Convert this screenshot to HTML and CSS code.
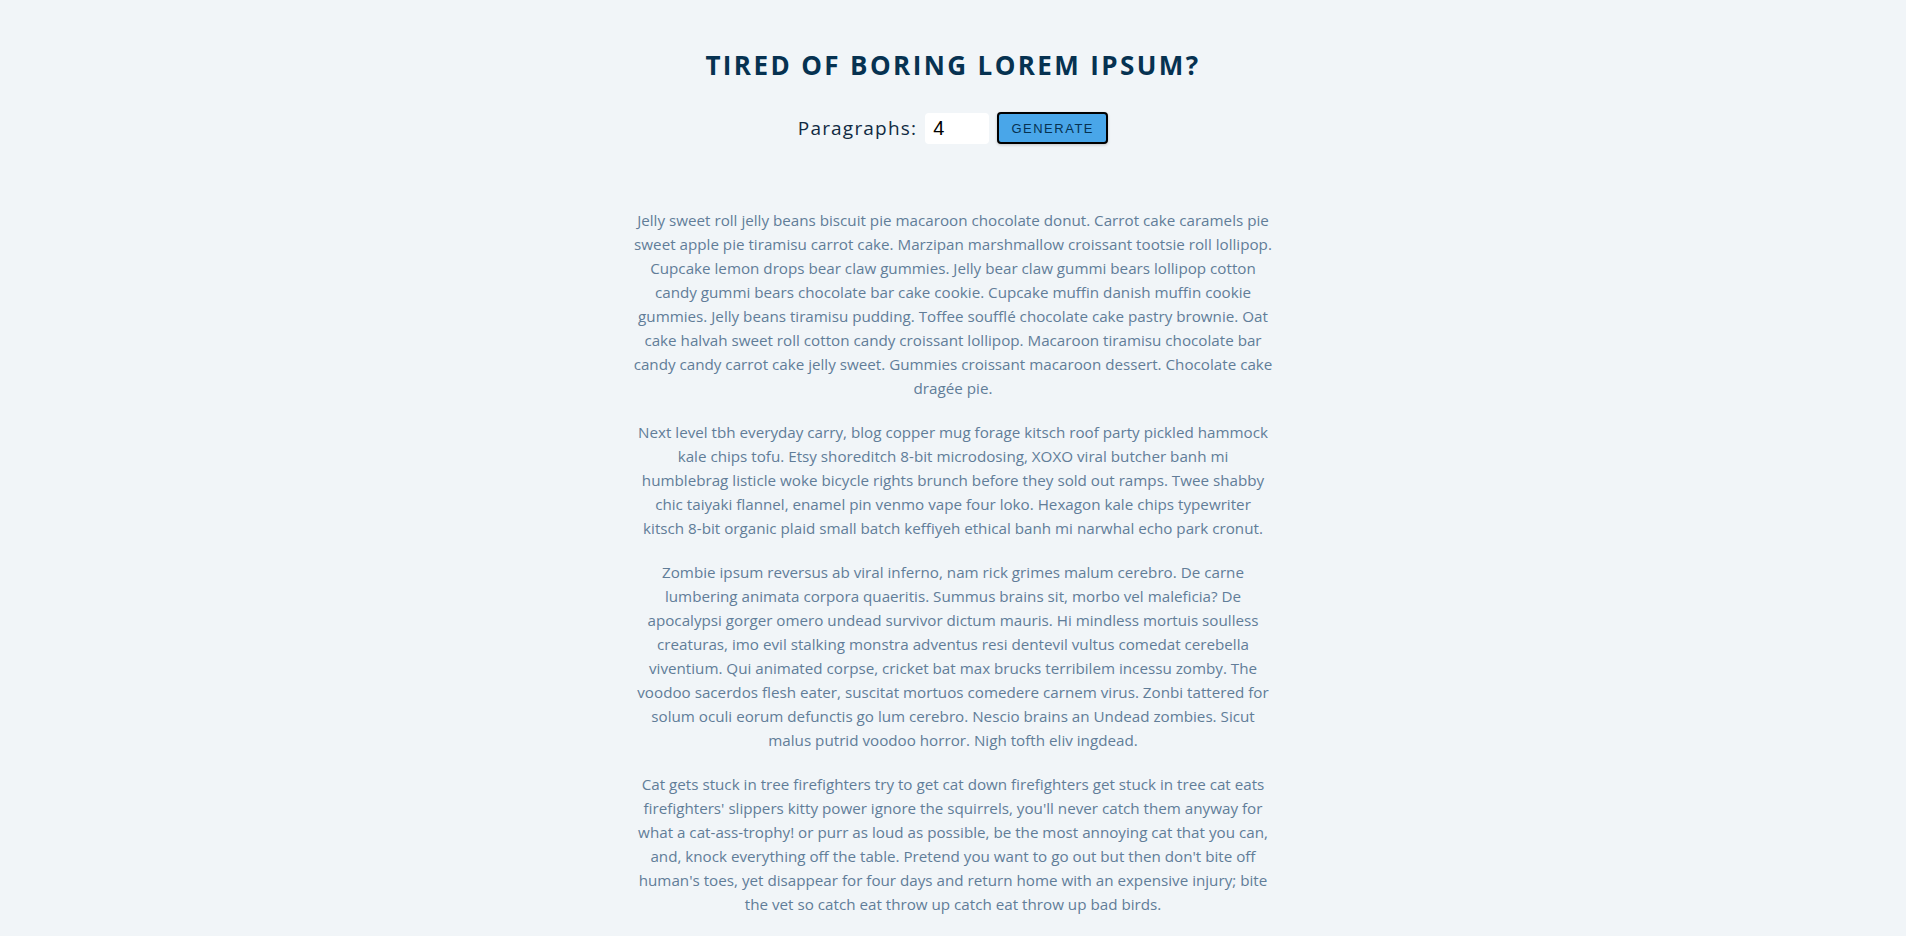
FILE: index.html
```html
<!DOCTYPE html>
<html lang="en">
<head>
<meta charset="utf-8">
<title>Lorem Ipsum Generator</title>
<link rel="stylesheet" href="styles.css">
</head>
<body>
<section class="section-center">
  <h3 class="title">Tired of boring lorem ipsum?</h3>
  <form class="lorem-form">
    <label class="form-label" for="amount">Paragraphs:</label>
    <input class="form-input" type="number" id="amount" name="amount" value="4">
    <button class="btn" type="button">Generate</button>
  </form>
  <article class="lorem-text">
    <p>Jelly sweet roll jelly beans biscuit pie macaroon chocolate donut. Carrot cake caramels pie sweet apple pie tiramisu carrot cake. Marzipan marshmallow croissant tootsie roll lollipop. Cupcake lemon drops bear claw gummies. Jelly bear claw gummi bears lollipop cotton candy gummi bears chocolate bar cake cookie. Cupcake muffin danish muffin cookie gummies. Jelly beans tiramisu pudding. Toffee soufflé chocolate cake pastry brownie. Oat cake halvah sweet roll cotton candy croissant lollipop. Macaroon tiramisu chocolate bar candy candy carrot cake jelly sweet. Gummies croissant macaroon dessert. Chocolate cake dragée pie.</p>
    <p>Next level tbh everyday carry, blog copper mug forage kitsch roof party pickled hammock kale chips tofu. Etsy shoreditch 8-bit microdosing, XOXO viral butcher banh mi humblebrag listicle woke bicycle rights brunch before they sold out ramps. Twee shabby chic taiyaki flannel, enamel pin venmo vape four loko. Hexagon kale chips typewriter kitsch 8-bit organic plaid small batch keffiyeh ethical banh mi narwhal echo park cronut.</p>
    <p>Zombie ipsum reversus ab viral inferno, nam rick grimes malum cerebro. De carne lumbering animata corpora quaeritis. Summus brains sit, morbo vel maleficia? De apocalypsi gorger omero undead survivor dictum mauris. Hi mindless mortuis soulless creaturas, imo evil stalking monstra adventus resi dentevil vultus comedat cerebella viventium. Qui animated corpse, cricket bat max brucks terribilem incessu zomby. The voodoo sacerdos flesh eater, suscitat mortuos comedere carnem virus. Zonbi tattered for solum oculi eorum defunctis go lum cerebro. Nescio brains an Undead zombies. Sicut malus putrid voodoo horror. Nigh tofth eliv ingdead.</p>
    <p>Cat gets stuck in tree firefighters try to get cat down firefighters get stuck in tree cat eats firefighters' slippers kitty power ignore the squirrels, you'll never catch them anyway for what a cat-ass-trophy! or purr as loud as possible, be the most annoying cat that you can, and, knock everything off the table. Pretend you want to go out but then don't bite off human's toes, yet disappear for four days and return home with an expensive injury; bite the vet so catch eat throw up catch eat throw up bad birds.</p>
  </article>
</section>
</body>
</html>
```

FILE: styles.css
```css
html {
  scrollbar-width: none;
}

body {
  margin: 0;
  background: #f1f5f8;
  font-family: "Open Sans", "Liberation Sans", sans-serif;
  color: #617d98;
}

.section-center {
  width: 90vw;
  max-width: 640px;
  margin: 0 auto;
  padding-top: 45px;
  text-align: center;
}

.title {
  margin: 0;
  font-size: 26px;
  line-height: 40px;
  font-weight: 700;
  letter-spacing: 2.4px;
  text-transform: uppercase;
  color: #063251;
}

.lorem-form {
  display: flex;
  justify-content: center;
  align-items: center;
  margin: 27px 0 64px;
  height: 32px;
}

.form-label {
  font-size: 19px;
  letter-spacing: 1.2px;
  color: #102a42;
}

.form-input {
  box-sizing: border-box;
  width: 64px;
  height: 31px;
  margin: 0 8px;
  padding: 2px 8px;
  border: none;
  border-radius: 4px;
  background: #fff;
  font-family: "Liberation Sans", Arial, sans-serif;
  font-size: 20px;
  color: #000;
  outline: none;
  -moz-appearance: textfield;
}

.form-input::-webkit-inner-spin-button,
.form-input::-webkit-outer-spin-button {
  -webkit-appearance: none;
  margin: 0;
}

.btn {
  box-sizing: border-box;
  height: 32px;
  width: 111px;
  padding: 0 10px;
  background: #49a6e9;
  color: #063251;
  border: 2px solid #000;
  border-radius: 4px;
  font-family: "Liberation Sans", Arial, sans-serif;
  font-size: 13px;
  letter-spacing: 1.5px;
  text-transform: uppercase;
  box-shadow: 0 1px 3px rgba(0, 0, 0, 0.2);
}

.lorem-text p {
  margin: 0 0 20px;
  font-size: 15.2px;
  line-height: 24px;
}
```
